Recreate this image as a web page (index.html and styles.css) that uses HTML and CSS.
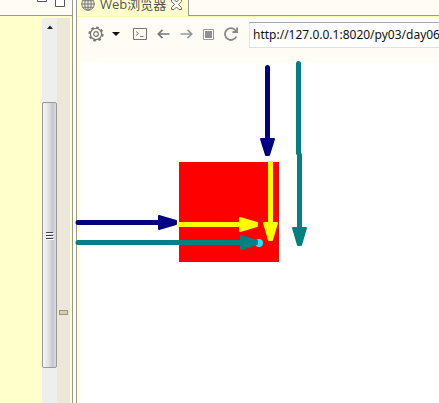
FILE: index.html
```html
<!DOCTYPE html>
<html lang="zh-CN">
<head>
<meta charset="utf-8">
<title>Web浏览器</title>
<link rel="stylesheet" href="styles.css">
</head>
<body>
<div class="workbench">
  <section class="editor">
    <header class="editor-head">
      <button class="win-button" aria-label="Minimize"><svg width="10" height="12"><path d="M.5 3.500H9.500V6.500H.5Z" fill="#fff" stroke="#555"/></svg></button>
      <button class="win-button" aria-label="Maximize"><svg width="10" height="12"><path d="M.5 .5H9.500V11.500H.5ZM.5 2.500H9.500" fill="#fff" stroke="#555"/></svg></button>
    </header>
    <div class="editor-body">
      <div class="code"></div>
      <div class="scrollbar">
        <svg class="scroll-up" width="15" height="17"><path d="M5 11L8 7.500L11 11Z" fill="#222"/></svg>
        <div class="thumb"><svg width="8" height="9"><path d="M0 1.500H7M0 4.500H7M0 7.500H7" stroke="#444"/><path d="M1 2.500H8M1 5.500H8M1 8.500H8" stroke="#fff"/></svg></div>
      </div>
      <div class="ruler"><span class="mark"></span></div>
    </div>
  </section>
  <section class="browser">
    <header class="tabs">
      <div class="tab">
        <svg width="14" height="14" viewBox="0 0 14 14" fill="none" stroke="#777"><circle cx="7" cy="7" r="6.300" fill="#eeeee0"/><ellipse cx="7" cy="7" rx="3.200" ry="6.300"/><path d="M7 .5V13.500M.5 7H13.500M1.500 3.700H12.500M1.500 10.300H12.500"/></svg>
        <span class="tab-title">Web浏览器</span>
        <button class="close" aria-label="Close"><svg width="11" height="11" viewBox="0 0 11 11"><path d="M.5 .5H3L5.500 3L8 .5H10.500V2.500L7.500 5.500L10.500 8.500V10.500H8L5.500 8L3 10.500H.5V8.500L3.500 5.500L.5 2.500Z" fill="#fff" stroke="#666"/></svg></button>
      </div>
    </header>
    <nav class="toolbar">
      <button class="tool settings" aria-label="Settings"><svg width="16" height="16" viewBox="0 0 16 16" fill="none" stroke="#777"><circle cx="8" cy="8" r="5.600" stroke-width="1.200"/><circle cx="8" cy="8" r="6.700" stroke-width="1.800" stroke-dasharray="2.630 2.630"/><circle cx="8" cy="8" r="2.300" stroke-width="1.200"/></svg></button>
      <button class="tool arrow-down" aria-label="Settings menu"><svg width="8" height="4"><path d="M0 0H8L4 4Z" fill="#111"/></svg></button>
      <button class="tool console" aria-label="Console"><svg width="14" height="12" fill="none" stroke="#777"><path d="M.5 .5H13.500V11.500H.5Z"/><path d="M3 3.500L5.500 5.500L3 7.500M7 8.500H10.500"/></svg></button>
      <button class="tool back" aria-label="Back"><svg width="13" height="10" fill="none" stroke="#777" stroke-width="1.700"><path d="M12.500 5H1.500M5.500 .8L1.300 5L5.500 9.200"/></svg></button>
      <button class="tool forward" aria-label="Forward"><svg width="13" height="10" fill="none" stroke="#999" stroke-width="1.700"><path d="M.5 5H11.500M7.500 .8L11.700 5L7.500 9.200"/></svg></button>
      <button class="tool stop" aria-label="Stop"><svg width="11" height="11"><path d="M.5 .5H10.500V10.500H.5Z" fill="#fff" stroke="#999"/><path d="M2 2H9V9H2Z" fill="#909090"/></svg></button>
      <button class="tool reload" aria-label="Reload"><svg width="14" height="14" fill="none" stroke="#888" stroke-width="1.800"><path d="M12.300 9.500A5.900 5.900 0 1 1 11.200 3L12.500 4.500M13 .5V5H8.500"/></svg></button>
      <input class="address" type="text" aria-label="Address" value="http://127.0.0.1:8020/py03/day06">
    </nav>
    <main class="page">
      <div class="box"></div>
      <svg class="notes" width="240" height="200" viewBox="75 62 240 200" stroke-width="5" stroke-linecap="round" stroke-linejoin="round">
        <g stroke="#000080" fill="#000080"><path d="M78 222.500H160M267.500 67.500V140"/><path stroke-width="2" d="M159 216L176 221V224L159 229ZM261 139H274L269 155H266Z"/></g>
        <g stroke="#ffff00" fill="#ffff00"><path stroke-linecap="butt" d="M178 224.500H242M270.500 161V225"/><path stroke-width="2" d="M240 218L257 223V226L240 231ZM264 223H277L272 240H269Z"/></g>
        <circle cx="259" cy="243" r="4" fill="#20e8f8"/>
        <g stroke="#008080" fill="#008080"><path d="M78 242.500H242M298.500 63.500V153M299.500 155V230"/><path stroke-width="2" d="M241 236L257 241V244L241 249ZM293 228H306L301 245H298Z"/></g>
      </svg>
    </main>
  </section>
</div>
</body>
</html>
```
FILE: styles.css
```css
* {
  box-sizing: border-box;
}

body {
  margin: 0;
  overflow: hidden;
  background: #fffcf5;
  font-family: "Open Sans", "Noto Sans CJK SC", sans-serif;
}

button {
  display: flex;
  padding: 0;
  border: 0;
  background: none;
}

svg {
  display: block;
  flex: none;
}

/* The header strips run off the top of the window. */
.workbench {
  display: flex;
  gap: 3px;
  height: calc(100vh + 12px);
  margin-top: -12px;
}

.editor {
  display: flex;
  flex-direction: column;
  width: 73px;
  border-right: 1px solid #999;
}

.editor-head {
  display: flex;
  justify-content: flex-end;
  align-items: flex-end;
  gap: 8px;
  height: 28px;
  padding: 0 7px 8px;
  border-bottom: 1px solid #999;
}

.editor-body {
  display: flex;
  flex: 1;
  padding: 2px 2px 0 0;
  background: #ffffcc;
}

.code {
  flex: 1;
}

.scrollbar {
  width: 15px;
  background: #eee;
}

.thumb {
  display: flex;
  align-items: center;
  justify-content: center;
  height: 266px;
  margin-top: 67px;
  border: 1px solid #999;
  border-radius: 2px;
  background: linear-gradient(90deg, #f5f5f5, #e4e4e6 40%, #c6c6ce 75%, #dcdce0);
}

.ruler {
  width: 13px;
  padding: 292px 2px 0;
  background: #ece8d9;
}

.mark {
  display: block;
  height: 5px;
  border: 1px solid #999580;
  background: #d4d0b8;
}

.browser {
  display: flex;
  flex: 1;
  flex-direction: column;
  min-width: 0;
  border-left: 1px solid #999;
  background: #ffffcc;
}

.tabs {
  display: flex;
  height: 29px;
  border-bottom: 1px solid #f4f8b8;
  background: linear-gradient(#fffcf5 27px, #999 27px);
}

.tab {
  display: flex;
  align-items: center;
  width: 112px;
  padding: 4px 6px 0 4px;
  border-right: 1px solid #999;
  background: #ffffcc;
}

.tab-title {
  flex: 1;
  padding-left: 5px;
  color: #555;
  font-size: 13px;
  line-height: 18px;
  white-space: nowrap;
}

.toolbar {
  display: flex;
  align-items: flex-start;
  height: 45px;
  margin-left: 2px;
  padding-top: 5px;
  background: #fffcf5;
}

.tool {
  align-items: center;
  height: 24px;
}

.settings {
  margin-left: 9px;
}

.arrow-down {
  margin-left: 8px;
}

.console {
  margin-left: 13px;
}

.back,
.forward,
.stop,
.reload {
  margin-left: 10px;
}

.address {
  flex: 1;
  min-width: 0;
  height: 26px;
  margin-left: 11px;
  padding: 0 0 2px 3px;
  border: 1px solid #dde1e8;
  border-top-color: #a5a8ac;
  border-right: 0;
  background: #fff;
  color: #111;
  font-family: "Noto Sans", sans-serif;
  font-size: 12px;
}

.page {
  position: relative;
  flex: 1;
  margin-left: 2px;
  padding: 100px;
  background: #fff;
}

.box {
  width: 100px;
  height: 100px;
  background: #f00;
}

/* Hand-drawn arrows laid over the page and its frame. */
.notes {
  position: absolute;
  top: 0;
  left: -4px;
  overflow: visible;
}
```
